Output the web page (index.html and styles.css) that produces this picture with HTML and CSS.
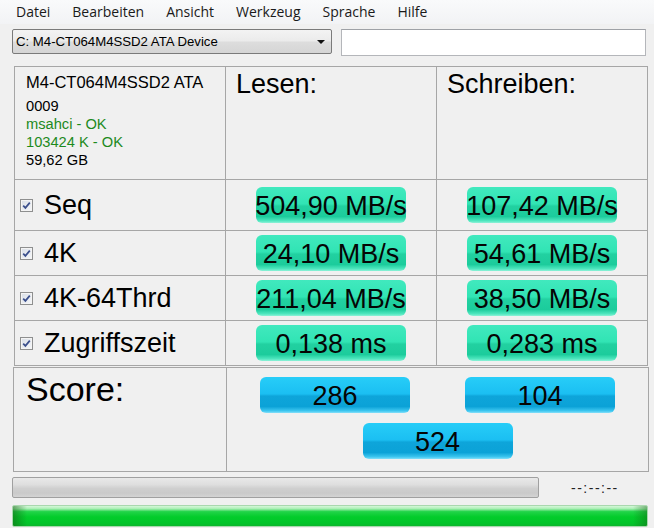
FILE: index.html
```html
<!DOCTYPE html>
<html>
<head>
<meta charset="utf-8">
<link rel="stylesheet" href="styles.css">
</head>
<body>
<div class="menubar">
  <span class="menu-item">Datei</span>
  <span class="menu-item">Bearbeiten</span>
  <span class="menu-item">Ansicht</span>
  <span class="menu-item">Werkzeug</span>
  <span class="menu-item">Sprache</span>
  <span class="menu-item">Hilfe</span>
</div>
<div class="toolbar">
  <div class="combo"><span class="combo-text">C: M4-CT064M4SSD2 ATA Device</span><span class="arrow"></span></div>
  <div class="field"></div>
</div>
<div class="results">
  <div class="cell info">
    <div class="model">M4-CT064M4SSD2 ATA</div>
    <div class="line">0009</div>
    <div class="line ok">msahci - OK</div>
    <div class="line ok">103424 K - OK</div>
    <div class="line">59,62 GB</div>
  </div>
  <div class="cell head">Lesen:</div>
  <div class="cell head">Schreiben:</div>

  <div class="cell label"><span class="check"><svg width="9" height="9" viewBox="0 0 9 9"><path d="M1.2 4.6 L3.4 6.9 L7.8 1.6" fill="none" stroke="#3b4f8c" stroke-width="1.7"/></svg></span>Seq</div>
  <div class="cell val"><span class="pill green">504,90 MB/s</span></div>
  <div class="cell val"><span class="pill green">107,42 MB/s</span></div>

  <div class="cell label"><span class="check"><svg width="9" height="9" viewBox="0 0 9 9"><path d="M1.2 4.6 L3.4 6.9 L7.8 1.6" fill="none" stroke="#3b4f8c" stroke-width="1.7"/></svg></span>4K</div>
  <div class="cell val"><span class="pill green">24,10 MB/s</span></div>
  <div class="cell val"><span class="pill green">54,61 MB/s</span></div>

  <div class="cell label"><span class="check"><svg width="9" height="9" viewBox="0 0 9 9"><path d="M1.2 4.6 L3.4 6.9 L7.8 1.6" fill="none" stroke="#3b4f8c" stroke-width="1.7"/></svg></span>4K-64Thrd</div>
  <div class="cell val"><span class="pill green">211,04 MB/s</span></div>
  <div class="cell val"><span class="pill green">38,50 MB/s</span></div>

  <div class="cell label"><span class="check"><svg width="9" height="9" viewBox="0 0 9 9"><path d="M1.2 4.6 L3.4 6.9 L7.8 1.6" fill="none" stroke="#3b4f8c" stroke-width="1.7"/></svg></span>Zugriffszeit</div>
  <div class="cell val"><span class="pill green">0,138 ms</span></div>
  <div class="cell val"><span class="pill green">0,283 ms</span></div>
</div>
<div class="score">
  <div class="score-label">Score:</div>
  <div class="score-vals">
    <div class="score-row"><span class="pill blue">286</span><span class="pill blue">104</span></div>
    <span class="pill blue">524</span>
  </div>
</div>
<div class="status">
  <div class="progress"></div>
  <span class="timer">--:--:--</span>
</div>
<div class="totalbar"></div>
</body>
</html>
```
FILE: styles.css
```css
html, body {
  margin: 0;
  padding: 0;
  background: #f0f0f0;
  width: 654px;
  height: 528px;
  overflow: hidden;
  font-family: "Liberation Sans", Arial, sans-serif;
  color: #000;
}

.menubar {
  height: 24px;
  display: flex;
  align-items: center;
  padding-left: 5px;
  background: linear-gradient(#f9fafb, #f2f3f5);
  font-family: "Open Sans", "Noto Sans", sans-serif;
  font-size: 14px;
  line-height: 24px;
  color: #1a1a1a;
}

.menu-item {
  padding: 0 11px;
}

.toolbar {
  margin-top: 5px;
  height: 27px;
  display: flex;
  align-items: flex-start;
}

.combo {
  margin-left: 12px;
  width: 318px;
  height: 23px;
  border: 1px solid #7a7a7a;
  border-radius: 2px;
  background: linear-gradient(#f3f3f3 0%, #ebebeb 48%, #dddddd 52%, #d5d5d5 100%);
  display: flex;
  align-items: center;
  justify-content: space-between;
  font-size: 13.2px;
}

.combo-text {
  padding-left: 3px;
}

.arrow {
  width: 0;
  height: 0;
  border-left: 4px solid transparent;
  border-right: 4px solid transparent;
  border-top: 4px solid #111;
  margin-right: 6px;
}

.field {
  margin-left: 9px;
  width: 303px;
  height: 25px;
  background: #fff;
  border: 1px solid #b4b6ba;
  border-top-color: #9ea1a6;
}

.results {
  margin-top: 10px;
  margin-left: 14px;
  width: 632px;
  padding: 1px;
  background: #a6a6a6;
  display: grid;
  grid-template-columns: 210px 210px 210px;
  grid-template-rows: 112px 50px 44px 44px 44px;
  gap: 1px;
}

.cell {
  background: #f0f0f0;
}

.info {
  padding: 7px 0 0 11px;
}

.model {
  font-size: 16.5px;
  line-height: 16.5px;
  margin-bottom: 6px;
}

.line {
  font-size: 14.67px;
  line-height: 18px;
}

.ok {
  color: #1d8a1d;
}

.head {
  font-size: 27px;
  line-height: 27px;
  padding: 4px 0 0 10px;
}

.label {
  display: flex;
  align-items: center;
  font-size: 27px;
  line-height: 27px;
}

.check {
  width: 11px;
  height: 11px;
  margin-left: 5px;
  margin-right: 11px;
  border: 1px solid #8e8f8f;
  background: linear-gradient(135deg, #d9dee6, #f5f7fa);
  box-shadow: inset 0 0 0 1px #f4f4f4;
  display: flex;
  align-items: center;
  justify-content: center;
}

.check svg {
  display: block;
}

.val {
  display: flex;
  align-items: center;
  justify-content: center;
}

.pill {
  width: 150px;
  height: 36px;
  border-radius: 6px;
  display: flex;
  align-items: center;
  justify-content: center;
  padding-top: 2px;
  box-sizing: border-box;
  font-size: 27px;
  line-height: 27px;
  white-space: nowrap;
  color: #050505;
}

.green {
  background: linear-gradient(#41e9be 0%, #31e4b4 47%, #22d1a1 53%, #1ccc9c 82%, #4fe7bf 94%, #8ff2d8 100%);
}

.blue {
  background: linear-gradient(#27cdf8 0%, #1bbff2 47%, #0ea5da 53%, #0ba2d7 82%, #3cc6f0 94%, #86e0fa 100%);
}

.score {
  margin-top: 1px;
  margin-left: 13px;
  width: 634px;
  height: 103px;
  border: 1px solid #a6a6a6;
  display: flex;
}

.score-label {
  width: 213px;
  border-right: 1px solid #a6a6a6;
  font-size: 34px;
  line-height: 34px;
  padding: 4px 0 0 12px;
  box-sizing: border-box;
}

.score-vals {
  flex: 1;
  display: flex;
  flex-direction: column;
  align-items: center;
  padding-top: 9px;
  gap: 10px;
}

.score-row {
  display: flex;
  gap: 55px;
}

.status {
  margin-top: 5px;
  height: 21px;
  display: flex;
  align-items: center;
}

.progress {
  margin-left: 12px;
  width: 525px;
  height: 19px;
  border: 1px solid #a0a0a0;
  border-radius: 2px;
  background: linear-gradient(#e9e9e9 0%, #dedede 35%, #cfcfcf 55%, #cacaca 80%, #d4d4d4 100%);
}

.timer {
  margin-left: 32px;
  font-size: 14px;
  letter-spacing: 1.5px;
  color: #222;
}

.totalbar {
  margin-top: 7px;
  margin-left: 12px;
  width: 634px;
  height: 20px;
  border: 1px solid #a9d8ae;
  border-radius: 2px;
  background:
    linear-gradient(90deg, rgba(20,100,20,0.55) 0px, rgba(20,100,20,0) 14px, rgba(20,100,20,0) 620px, rgba(20,100,20,0.45) 634px),
    linear-gradient(#d6f7da 0%, #a9efb3 14%, #22d449 28%, #03cc2b 55%, #02c52a 85%, #0bb72c 100%);
}
```
